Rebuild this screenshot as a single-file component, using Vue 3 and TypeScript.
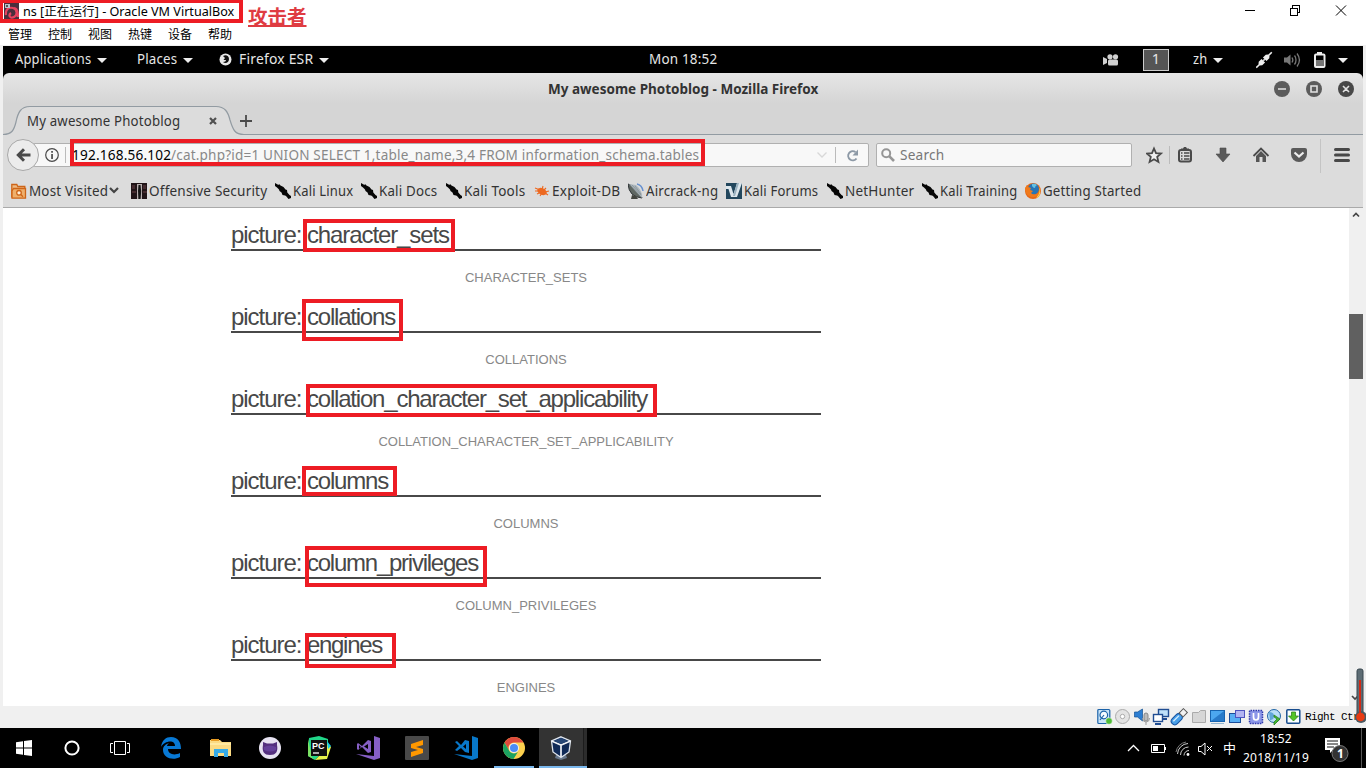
<script setup lang="ts">
interface Bookmark { label: string; icon: string; cell: number; text: number }
interface Entry { name: string; width: number }
interface Mark { x: number; y: number; w: number; h: number }

const bookmarks: Bookmark[] = [
  { label: 'Most Visited', icon: 'folder', cell: 120, text: 79 },
  { label: 'Offensive Security', icon: 'offsec', cell: 144, text: 118 },
  { label: 'Kali Linux', icon: 'kali', cell: 86, text: 60 },
  { label: 'Kali Docs', icon: 'kali', cell: 85, text: 58 },
  { label: 'Kali Tools', icon: 'kali', cell: 88, text: 61 },
  { label: 'Exploit-DB', icon: 'bug', cell: 94, text: 68 },
  { label: 'Aircrack-ng', icon: 'air', cell: 98, text: 72 },
  { label: 'Kali Forums', icon: 'forum', cell: 101, text: 74 },
  { label: 'NetHunter', icon: 'kali', cell: 95, text: 69 },
  { label: 'Kali Training', icon: 'kali', cell: 103, text: 77 },
  { label: 'Getting Started', icon: 'fox', cell: 120, text: 98 },
]
const entries: Entry[] = [
  { name: 'character_sets', width: 142 },
  { name: 'collations', width: 88 },
  { name: 'collation_character_set_applicability', width: 340 },
  { name: 'columns', width: 81 },
  { name: 'column_privileges', width: 171 },
  { name: 'engines', width: 75 },
]
const menus: string[] = ['管理', '控制', '视图', '热键', '设备', '帮助']
const marks: Mark[] = [
  { x: -1, y: -1, w: 244, h: 24 },
  { x: 70, y: 139, w: 635, h: 27 },
  { x: 303, y: 219, w: 152, h: 33 },
  { x: 302, y: 299, w: 101, h: 42 },
  { x: 306, y: 384, w: 351, h: 33 },
  { x: 302, y: 466, w: 95, h: 30 },
  { x: 305, y: 546, w: 182, h: 41 },
  { x: 305, y: 633, w: 91, h: 35 },
]

// Spreads or tightens the letters so that a label occupies the given width.
const vTrack = {
  mounted(el: HTMLElement, binding: { value: number }) {
    const count = (el.textContent ?? '').trim().length
    const base = parseFloat(getComputedStyle(el).letterSpacing) || 0
    const natural = el.getBoundingClientRect().width
    el.style.letterSpacing = `${base + (binding.value - natural) / Math.max(1, count)}px`
  },
}

// Condenses the letterforms so that a label occupies the given width.
const vFit = {
  mounted(el: HTMLElement, binding: { value: number }) {
    const natural = el.getBoundingClientRect().width
    el.style.transformOrigin = '0 50%'
    el.style.transform = `scaleX(${(binding.value + 0.3) / natural})`
    el.style.marginRight = `${binding.value - natural}px`
  },
}
</script>

<template>
  <div class="desktop">
    <header class="wintitle">
      <svg class="logo" width="15" height="17" viewBox="0 0 15 17"><rect width="15" height="17" fill="#4b2f3d" /><path d="M2 12C1 6 5 4 9 5s5 7 1 9-6-2-3-4M10 5c4 0 4 6 4 9" fill="none" stroke="#e8435f" stroke-width="2.2" /><path d="M1 1h5v4H1z" fill="#b9c3cc" /><path d="M2 2h2v2H2z" fill="#555" /></svg>
      <span v-fit="211" class="t">ns [正在运行] - Oracle VM VirtualBox</span>
      <span class="attacker">攻击者</span>
      <svg class="winctl" width="106" height="20" viewBox="0 0 106 20" fill="none" stroke="#000" shape-rendering="crispEdges"><path d="M0 10.500h10M45.500 8.500h7v7h-7zM47.500 8v-2.500h7v7H53" /><path d="M91 5.500l10 10M101 5.500l-10 10" shape-rendering="auto" /></svg>
    </header>
    <nav class="menubar"><span v-for="m in menus" :key="m">{{ m }}</span></nav>

    <main class="vm">
      <div class="guest">
        <div class="gnome">
          <div class="g-apps"><span v-fit="76" class="t">Applications</span><i class="tri" /></div>
          <div class="g-places"><span v-fit="40" class="t">Places</span><i class="tri" /></div>
          <div class="g-ff">
            <svg width="13" height="13" viewBox="0 0 13 13"><circle cx="6.500" cy="6.500" r="6" fill="#e8e8e8" /><path d="M4 3c3-2 6 0 6 3 0 4-4 5-6 3 2 0 3-1 3-2H4.500l1.500-2z" fill="#111" /></svg>
            <span v-fit="74" class="t">Firefox ESR</span><i class="tri" />
          </div>
          <div class="g-clock"><span v-fit="68" class="t">Mon 18:52</span></div>
          <svg class="g-cam" width="16" height="12" viewBox="0 0 16 12" fill="#d0d0d0"><path d="M0 3l4 2v4l-4 2z" /><circle cx="7" cy="2.800" r="2.600" /><circle cx="12.500" cy="2.800" r="2.600" /><rect x="5" y="5.500" width="10" height="6" rx="1.500" /></svg>
          <div class="g-work"><span class="t">1</span></div>
          <div class="g-zh"><span v-fit="14" class="t">zh</span><i class="tri" /></div>
          <svg class="g-tray" width="94" height="18" viewBox="0 0 94 18">
            <g transform="translate(8 9) rotate(-45)" fill="#eee"><path d="M-11-.8h4L-5-2.500h4v5h-4L-7 .8h-4zM11-.8H7L5-2.500H1v5h4L7 .8h4z" /><path d="M-1-.8h2v1.600h-2z" /></g>
            <path d="M28 6.500h3l3.500-3v11l-3.500-3h-3z" fill="#777" /><path d="M36 6.500c1 1.500 1 3.500 0 5M38.500 4.500c2 2.500 2 6.500 0 9M41 2.500c3 4 3 9 0 13" fill="none" stroke="#777" stroke-width="1.300" />
            <path d="M61 1h5v2h-5z" fill="#eee" /><rect x="59" y="3.500" width="9.500" height="12.500" rx="1" fill="none" stroke="#eee" stroke-width="2" /><path d="M60 9h7.500v6H60z" fill="#777" />
            <path d="M82 7h10l-5 5z" fill="#eee" />
          </svg>
        </div>

        <div class="ffhead">
          <div class="fftitle">
            <span v-fit="270" class="t">My awesome Photoblog - Mozilla Firefox</span>
            <svg width="82" height="16" viewBox="0 0 82 16"><g fill="#5c5c5c"><circle cx="8" cy="8" r="8" /><circle cx="40" cy="8" r="8" /><circle cx="72" cy="8" r="8" fill="#484848" /></g><path d="M4 8h8M37 5h6v6h-6zM69 5l6 6M75 5l-6 6" stroke="#e2e2e2" stroke-width="1.600" fill="none" /></svg>
          </div>
          <div class="tabs">
            <svg class="tabshape" width="1360" height="31" viewBox="0 0 1360 31"><path d="M0 29.500C9 29.500 11 25 13 17 15 7 18 2 27 2H213C222 2 225 7 227 15 230 25 232 29.500 241 29.500H1360V31H0z" fill="#dcdcdc" /><path d="M0 29.500C9 29.500 11 25 13 17 15 7 18 1.500 27 1.500H213C222 1.500 225 7 227 15 230 25 232 29.500 241 29.500H1360" fill="none" stroke="#929ba2" stroke-width="1.200" /></svg>
            <div class="tabtext">
              <span v-fit="153" class="t">My awesome Photoblog</span>
              <svg class="x" width="8" height="8" viewBox="0 0 8 8"><path d="M1 1l6 6M7 1L1 7" stroke="#505050" stroke-width="2.200" /></svg>
              <svg class="plus" width="12" height="12" viewBox="0 0 12 12"><path d="M6 0v12M0 6h12" stroke="#4a4a4a" stroke-width="1.800" /></svg>
            </div>
          </div>
        </div>

        <div class="navbar">
          <div class="back"><svg width="15" height="14" viewBox="0 0 15 14"><path d="M14.500 7H3M8 1.300L2.300 7 8 12.700" fill="none" stroke="#4a4a4a" stroke-width="3" /></svg></div>
          <div class="urlbar">
            <svg width="14" height="14" viewBox="0 0 14 14"><circle cx="7" cy="7" r="6.300" fill="none" stroke="#4a4a4a" stroke-width="1.200" /><path d="M6.200 3h1.700v1.700H6.200zM6.200 6h1.700v5H6.200z" fill="#4a4a4a" /></svg>
            <i class="sep" />
            <span v-fit="99" class="host">192.168.56.102</span><span v-fit="528" class="path">/cat.php?id=1 UNION SELECT 1,table_name,3,4 FROM information_schema.tables</span>
            <svg class="drop" width="10" height="6" viewBox="0 0 10 6"><path d="M.5.500L5 5 9.500.500" fill="none" stroke="#d8d8d8" stroke-width="1.300" /></svg>
            <i class="sep2" />
            <svg class="reload" width="13" height="13" viewBox="0 0 13 13"><path d="M10.500 9.500A4.600 4.600 0 1 1 9.500 3" fill="none" stroke="#8d99a6" stroke-width="2" /><path d="M12 .5v6H6.500z" fill="#8d99a6" /></svg>
          </div>
          <div class="search">
            <svg width="14" height="14" viewBox="0 0 14 14" fill="none" stroke="#969696"><circle cx="5.200" cy="5.200" r="4" stroke-width="2" /><path d="M8.200 8.200L13 13" stroke-width="2.600" /></svg>
            <span v-fit="44" class="t">Search</span>
          </div>
          <svg class="tools" width="208" height="38" viewBox="0 0 208 38">
            <path d="M8 12.500l2 4.700 5 .4-3.800 3.300 1.200 5L8 23.200l-4.400 2.700 1.200-5L1 17.600l5-.4z" fill="#f0f0f0" stroke="#4a4a4a" stroke-width="1.800" />
            <path d="M23.500 10v18" stroke="#bbb" />
            <rect x="33" y="14" width="12" height="11.500" rx="2" fill="none" stroke="#4a4a4a" stroke-width="2" /><path d="M35 13.500v-1h2l1-1.500h2l1 1.500h2v1z" fill="#4a4a4a" /><path d="M35 17h1.500M38 17h5.500M35 20h1.500M38 20h5.500M35 23h1.500M38 23h5.500" stroke="#4a4a4a" stroke-width="1.400" />
            <path d="M74 12h6v6h4l-7 8-7-8h4z" fill="#5a5a5a" stroke="#4a4a4a" stroke-width=".6" />
            <path d="M107.500 20L115 12.500l7.500 7.500" fill="none" stroke="#4a4a4a" stroke-width="1.800" /><path d="M110 20l5-5 5 5v6h-3.500v-5h-3v5H110z" fill="#555" />
            <path d="M145 14q0-2 2-2h12q2 0 2 2v4a8 8 0 0 1-16 0z" fill="#5a5a5a" /><path d="M148.500 16.500l4.500 4 4.500-4" fill="none" stroke="#eee" stroke-width="2.200" />
            <path d="M174.500 3v34" stroke="#c4c4c4" />
            <path d="M189.500 13.500h13M189.500 19h13M189.500 24.500h13" stroke="#484848" stroke-width="3" stroke-linecap="round" />
          </svg>
        </div>

        <div class="bookmarks">
          <div v-for="b in bookmarks" :key="b.label" class="bm" :style="{ width: b.cell + 'px' }">
            <svg width="16" height="16" viewBox="0 0 16 16">
              <g v-if="b.icon === 'folder'" fill="none" stroke="#ce6518" stroke-width="1.300"><path d="M.8 14.500V1.500h5l1 2h7v2" fill="#eebb85" /><path d="M2.500 5.500h12v9.700H1V8z" fill="#efb06c" /><circle cx="8" cy="9.800" r="2.300" fill="#fff0dc" /><path d="M9.800 11.500l2.200 2.200" /></g>
              <g v-else-if="b.icon === 'offsec'"><path d="M0 0h16v16H0z" fill="#211518" /><path d="M1 2h3v4H1zM12 2h3v4h-3zM1 8h4v2H1zM12 8h4v2h-4z" fill="#452b2f" /><path d="M6 1h5v15H6z" fill="#b9b0b0" /><path d="M7.500 2h2l.7 6-.6 8H7.400L7 8z" fill="#161616" /></g>
              <path v-else-if="b.icon === 'kali'" d="M0 0l3.500 2L4 1l1.500 1.500 3 1.500 2 2.500 1.500.5.300 2.500 2.200 2.500 1.500 1v2L13.500 16l-2.500-3-1-.5-2.500-.5L6.500 9.500 4.500 8 4 6.500 2 4.500 0 3z" fill="#060606" />
              <g v-else-if="b.icon === 'bug'" fill="#ed6921"><ellipse cx="8" cy="8.500" rx="5" ry="3.300" transform="rotate(25 8 8.500)" /><path d="M1 5l5 2M3 11l4-2M9 3l-1 4M12 5l-3 3M15 8l-4 1M14 12l-3-2M6 13l2-3M1 8h5" stroke="#ed6921" stroke-width="1.100" /></g>
              <g v-else-if="b.icon === 'air'"><path d="M0 1Q1 14 14 15L10 5z" fill="#5f6762" stroke="#32373a" /><path d="M1 1L14 15Q15 8 8 2z" fill="#adb8be" /><path d="M2 2l11 12M4 2l9 10M7 3l6 8" stroke="#788389" stroke-width=".6" /><path d="M9 1q5 1 6 7" fill="none" stroke="#6790cf" stroke-width="1.500" /><path d="M4 12l-1 4h7l-2-3z" fill="#43453f" /></g>
              <g v-else-if="b.icon === 'forum'"><path d="M0 0h16v16H0z" fill="#23475d" /><path d="M0 3h5l2.500 8L11 0h5l-5 14H5L2.500 6H0z" fill="#dce6ec" /><path d="M11 0h2L9 13H7z" fill="#9ab2c0" /></g>
              <g v-else><circle cx="8" cy="8" r="8" fill="#e66817" /><circle cx="8.500" cy="6" r="5.500" fill="#2875b5" /><path d="M7 1q3-1 5 1-2 1-2 3-2 0-3-2z" fill="#63c2e4" /><path d="M0 5l2-3 1 2 3 1-1 2 3 1-2 2q3 3 7 0 2-2 1-6 2 4 0 7-3 4-8 3Q0 12 0 5z" fill="#f07a1b" /><path d="M14 4q2 3 1 7-1 3-4 4 5-5 3-11z" fill="#ffd34a" /></g>
            </svg>
            <span v-fit="b.text" class="t">{{ b.label }}</span>
            <svg v-if="b.icon === 'folder'" class="chev" width="10" height="7" viewBox="0 0 10 7"><path d="M1 1l4 4 4-4" fill="none" stroke="#444" stroke-width="2.200" /></svg>
          </div>
        </div>

        <div class="page">
          <div class="content">
            <section v-for="e in entries" :key="e.name" class="entry">
              <h2><span v-track="76">picture:&nbsp;</span><span v-track="e.width">{{ e.name }}</span></h2>
              <p>{{ e.name.toUpperCase() }}</p>
            </section>
          </div>
          <aside class="scroll">
            <svg width="14" height="14" viewBox="0 0 14 14"><path d="M4 8.500l3-3 3 3" fill="none" stroke="#444" stroke-width="1.700" /></svg>
            <i class="thumb" />
            <svg class="down" width="14" height="14" viewBox="0 0 14 14"><path d="M3 5l3 3 3-3" fill="none" stroke="#444" stroke-width="1.700" /></svg>
          </aside>
        </div>
      </div>
    </main>

    <div class="status">
      <svg width="204" height="18" viewBox="0 0 204 18">
        <g fill="#c9e4f8" stroke="#1b62a8" stroke-width="1.200"><rect x=".8" y="1.500" width="12" height="14" rx="1" /><circle cx="6.800" cy="7" r="3.800" fill="#f6fbff" /><path d="M7 7l-4 5" /></g><circle cx="12" cy="13" r="3.300" fill="#4fbb37" stroke="#fff" stroke-width=".5" />
        <circle cx="25.500" cy="8.500" r="7" fill="#e3e3e3" stroke="#aaa" /><circle cx="25.500" cy="8.500" r="2.200" fill="#fff" stroke="#aaa" />
        <path d="M37.500 4h3l5-3v12l-5-4h-3z" fill="#2d7ed2" stroke="#155394" stroke-width=".7" /><rect x="47" y="5" width="4" height="8" rx="2" fill="#bbb" stroke="#888" /><path d="M45.500 10q0 4 3.500 4t3.500-4M49 14v3" fill="none" stroke="#999" />
        <g stroke="#204d92"><rect x="61.500" y="1.500" width="10" height="7" fill="#bfe1fa" stroke-width="1.400" /><path d="M65 11h5" stroke-width="2" /><rect x="56.500" y="6.500" width="9" height="7" fill="#fff" stroke-width="1.400" /><path d="M58 16h6" stroke-width="2" /></g>
        <g transform="translate(82 9) rotate(-45)"><rect x="-9.500" y="-3.600" width="12.500" height="7.200" rx="3.600" fill="#49a0e9" stroke="#1652a0" /><path d="M-7-1h8" stroke="#d7eeff" stroke-width="1.300" /><rect x="3" y="-2.800" width="6" height="5.600" fill="#f2f2f2" stroke="#555" /></g>
        <path d="M95.500 14.500v-10h6l2-2h5v12z" fill="#d6d6d6" stroke="#aaa" />
        <rect x="113.500" y="2.500" width="14" height="11" fill="#4ca7ef" stroke="#1764b0" /><path d="M114 13L127 3v10z" fill="#287ac9" /><path d="M114 15.500h13" stroke="#96b8d0" />
        <g stroke="#1b4d9a"><rect x="132.500" y="5.500" width="11" height="9" fill="#57aef4" /><rect x="138.500" y="2.500" width="9" height="7" fill="#b2b4f1" stroke="#4f55c0" /></g>
        <rect x="152.500" y="2.500" width="13" height="13" rx="1" fill="#8c97e8" stroke="#2e38ac" stroke-dasharray="1.500 1" stroke-width="1.500" /><path d="M156.500 5v4q0 3 2.500 3t2.500-3V5" fill="none" stroke="#fff" stroke-width="1.700" />
        <circle cx="177" cy="8" r="6.500" fill="#b8def8" stroke="#2367a6" /><path d="M172 4q5 0 5 4t-4 4" fill="#5fa6d8" /><path d="M177 7l6 4-6 6v-3l3-3-3-2z" fill="#46b72f" stroke="#217a1b" stroke-width=".7" />
        <rect x="189.800" y="1.800" width="13" height="13.500" rx="1" fill="#f9ffff" stroke="#174c8e" stroke-width="1.500" /><path d="M194.500 4h4v4h3l-5 5-5-5h3z" fill="#54c527" stroke="#267914" stroke-width=".7" />
      </svg>
      <span v-track="60" class="t">Right Ctrl</span>
    </div>

    <footer class="taskbar">
      <div class="cell"><svg width="16" height="16" viewBox="0 0 16 16" fill="#fff"><path d="M0 2.200l7-1v6.300H0zM8 1l8-1v7.500H8zM0 8.500h7v6.300l-7-1zM8 8.500h8V16l-8-1z" /></svg></div>
      <div class="cell"><svg width="16" height="16" viewBox="0 0 16 16"><circle cx="8" cy="8" r="6.600" fill="none" stroke="#fff" stroke-width="2" /></svg></div>
      <div class="cell"><svg width="20" height="14" viewBox="0 0 20 14" fill="none" stroke="#fff"><path d="M4.500.5h11v13h-11zM3 2.500H.5v9H3M17 2.500h2.500v9H17" /></svg></div>
      <div class="cell app first"><svg width="20" height="22" viewBox="0 0 20 22"><path d="M0 10C1 3 5 0 10 0c7 0 10 5 10 12H7c0 5 6 7 12 4v4C12 24 2 21 2 13c0-4 3-6 6-7-1 1-2 2-2 3h8C14 2 3 4 0 10z" fill="#0879d5" /></svg></div>
      <div class="cell app"><svg width="22" height="18" viewBox="0 0 22 18"><path d="M0 1h10l2 2h9v14H0z" fill="#fbdb83" /><path d="M1 0h8v2H1z" fill="#e89c24" /><path d="M0 4h21v2H0z" fill="#ffe9a0" /><path d="M4 18v-8h14v8h-4v-4H8v4z" fill="#37abe7" /></svg></div>
      <div class="cell app"><svg width="22" height="22" viewBox="0 0 22 22"><circle cx="11" cy="11" r="11" fill="#e7e3f2" /><path d="M4 5l4 1.500h6L18 5v3q2 10-7 10T4 8z" fill="#54307f" /><path d="M5 10q6-3 12 0v3q-6 3-12 0z" fill="#65419a" /></svg></div>
      <div class="cell app"><svg width="24" height="24" viewBox="0 0 24 24"><path d="M2 2l10-2 9 3v8L8 24 1 20z" fill="#21d789" /><path d="M20 7l4 4-4 12-12 1 7-7z" fill="#e8f34a" /><path d="M1 3l4 18 3 3-7-4z" fill="#7be264" /><path d="M20 5l4 5-3 3z" fill="#12c9e8" /><rect x="4" y="4" width="16" height="16" fill="#101010" /><text x="5" y="12.500" class="pc">PC</text><path d="M6 17h6" stroke="#fff" stroke-width="1.300" /></svg></div>
      <div class="cell app"><svg width="24" height="24" viewBox="0 0 24 24"><path d="M18 0l6 2v20l-6 2L0 18l18 2z" fill="#865fc5" /><path d="M2 7l4 3 6-6 3 1v11l-3 1-6-6-4 3-1-1V8z" fill="#865fc5" /><path d="M3 9v4l2-2zM12 8v5l-4-2.500z" fill="#000" /></svg></div>
      <div class="cell app"><svg width="24" height="24" viewBox="0 0 24 24"><rect width="24" height="24" rx="1" fill="#494949" /><path d="M6 8l12-4v5l-7 2 7 2v4L6 21v-5l7-2-7-2z" fill="#ff9800" /></svg></div>
      <div class="cell app"><svg width="24" height="24" viewBox="0 0 24 24"><path d="M18 0l6 2v20l-6 2L0 18l18 2z" fill="#0878c9" /><path d="M1 6l2-1 4 4 4-5 4 1v12l-4-1-4-4-4 3-2-1 4-4z" fill="#0878c9" /><path d="M12 8v5l-3-2.500z" fill="#000" /></svg></div>
      <div class="cell app chrome"><svg width="22" height="22" viewBox="0 0 22 22"><circle cx="11" cy="11" r="11" fill="#fcd04e" /><path d="M1.500 5.500A11 11 0 0 1 20.500 5.500H11A5.500 5.500 0 0 0 6 13.500z" fill="#df4b3d" /><path d="M1.500 5.500A11 11 0 0 0 10.500 22L15.700 13.700A5.500 5.500 0 0 1 6.200 13.700z" fill="#1ba261" /><circle cx="11" cy="11" r="5" fill="#f1f1f1" /><circle cx="11" cy="11" r="4" fill="#4a8bf5" /></svg></div>
      <div class="cell vbox"><svg width="22" height="24" viewBox="0 0 22 24"><path d="M6 19h10l1 3-6 2-6-2z" fill="#66768b" /><path d="M11 .8L20.500 5 19 16l-8 5.500L3 16 1.500 5z" fill="#102a57" stroke="#dfe5ed" stroke-width="1.300" /><path d="M1.500 5L11 9l9.500-4M11 9v12" fill="none" stroke="#f0f3f7" stroke-width="1.700" /><path d="M4 5l7-3 7 3-7 3z" fill="#274776" /></svg></div>
      <svg class="tray" width="120" height="40" viewBox="0 0 120 40" fill="none" stroke="#fff">
        <path d="M8 23l5.500-5.500L19 23" stroke-width="1.300" />
        <path d="M31.500 16.500h13v8h-13zM45.500 19v3" /><path d="M33 18h5v5h-5z" fill="#fff" stroke="none" />
        <path d="M57.500 26A11 11 0 0 1 68 15.500M60.500 27A8 8 0 0 1 68.500 19M64 27.500a5 5 0 0 1 5-5" stroke="#ccc" /><path d="M56 24A12 12 0 0 1 66 14" stroke="#777" /><circle cx="68" cy="26.500" r="1.400" fill="#fff" stroke="none" />
        <path d="M78.500 18.500h2.500l4-3.500v12l-4-3.500h-2.500zM87 18l5 5M92 18l-5 5" />
      </svg>
      <span class="ime">中</span>
      <div class="clock"><span v-track="32">18:52</span><span v-track="66">2018/11/19</span></div>
      <svg class="notif" width="26" height="28" viewBox="0 0 26 28"><path d="M1 3h15v12H9l-3 3v-3H1z" fill="#fff" /><path d="M3 6h11M3 9h11M3 12h7" stroke="#111" /><circle cx="16" cy="18.500" r="8" fill="#333" stroke="#777" /><text x="13" y="23" class="one">1</text></svg>
      <i class="peek" />
    </footer>

    <div v-for="(m, i) in marks" :key="i" class="mark" :style="{ left: m.x + 'px', top: m.y + 'px', width: m.w + 'px', height: m.h + 'px' }" />
    <svg class="thermo" width="12" height="56" viewBox="0 0 12 56"><rect x="2" y="1" width="6" height="46" rx="2" fill="#5d6c74" stroke="#38464e" /><circle cx="6" cy="49" r="6" fill="#495961" /><path d="M5 12v36" stroke="#d02b17" stroke-width="2" /><circle cx="5.500" cy="49" r="4.300" fill="#e83b12" /></svg>
  </div>
</template>

<style>
body { margin: 0; overflow: hidden; }
</style>

<style scoped>
* { box-sizing: border-box; }
svg { display: block; flex: none; }
.desktop { position: relative; width: 1366px; height: 768px; overflow: hidden; display: flex; flex-direction: column; background: #fff; font-family: "Noto Sans", "Noto Sans CJK SC", sans-serif; font-size: 14.5px; color: #333; }
.t, .host, .path, .clock span, h2 span { display: inline-block; white-space: nowrap; flex: none; }
.gnome .t, .navbar span, .bookmarks .t, .tabtext .t { letter-spacing: 0.2px; }
.wintitle { height: 24px; flex: none; display: flex; align-items: flex-start; color: #000; font-size: 12px; }
.logo { margin: 3px 4px 0 4px; }
.wintitle .t { line-height: 16px; margin-top: 4px; width: max-content; }
.attacker { margin-left: 14px; margin-top: 4px; height: 24px; font: bold 19.500px/24px "Noto Sans CJK SC", sans-serif; color: #df3c42; text-decoration: underline; text-decoration-thickness: 2px; text-underline-offset: 1px; }
.winctl { margin-left: auto; margin-right: 15px; }
.menubar { height: 21px; flex: none; display: flex; padding-left: 8px; font: 12px/20px "Noto Sans CJK SC", sans-serif; color: #000; }
.menubar span { width: 40px; }
.vm { height: 661px; flex: none; background: #f0f0f0; padding: 1px 3px 0; }
.guest { height: 660px; display: flex; flex-direction: column; background: #000; }
.gnome { height: 27px; flex: none; display: flex; align-items: center; color: #e6e6e6; background: #000; line-height: 20px; }
.gnome > div { display: flex; align-items: center; flex: none; height: 27px; }
.gnome .t { margin-top: -4px; }
.tri { width: 0; height: 0; border: 5px solid transparent; border-top-color: #eee; border-bottom: 0; margin-left: 6px; margin-top: 1px; flex: none; }
.g-apps { width: 122px; padding-left: 12px; }
.g-places { width: 91px; padding-left: 12px; }
.g-ff { width: 430px; padding-left: 3px; }
.g-ff svg { margin-right: 7px; }
.g-clock { width: 457px; }
.g-clock .t { margin-left: 3px; }
.g-cam { margin-right: 24px; }
.gnome .g-work { width: 26px; height: 22px; border: 1px solid #ccc; background: #555; justify-content: center; }
.g-zh { width: 64px; padding-left: 24px; }
.g-tray { margin-left: 23px; }
.ffhead { height: 63px; flex: none; border-radius: 6px 6px 0 0; background: linear-gradient(#e6e6e6, #d5d5d5 30px, #d5d5d5); }
.fftitle { height: 32px; display: flex; align-items: center; font-weight: bold; padding-left: 545px; }
.fftitle .t { margin-top: -3px; }
.fftitle svg { margin-left: auto; margin-right: 7px; }
.tabs { height: 31px; display: grid; }
.tabs > * { grid-area: 1 / 1; }
.tabtext { display: flex; align-items: center; height: 30px; padding-left: 24px; }
.tabtext .x { margin-left: 29px; margin-top: 2px; }
.tabtext .plus { margin-left: 23px; margin-top: 2px; }
.navbar { height: 38px; flex: none; background: #dcdcdc; display: flex; align-items: center; padding-left: 4px; }
.back { width: 32px; height: 32px; border-radius: 50%; border: 1px solid #a8a8a8; background: #ececec; display: flex; align-items: center; justify-content: center; flex: none; z-index: 1; }
.urlbar { width: 836px; height: 24px; margin-left: -6px; border: 1px solid #b0b0b0; border-radius: 2px; background: #f8f8f8; display: flex; align-items: center; flex: none; padding-left: 11px; }
.sep, .sep2 { width: 1px; height: 16px; background: #bbb; flex: none; }
.sep { margin: 0 6px 0 6px; }
.host, .path, .search .t, .bm .t { margin-top: -2px; }
.host { color: #000; }
.path { color: #888; }
.drop { margin-left: auto; }
.sep2 { margin: 0 10px 0 8px; }
.reload { margin-right: 9px; }
.search { width: 256px; height: 24px; margin-left: 7px; flex: none; border: 1px solid #b0b0b0; border-radius: 2px; background: #f8f8f8; display: flex; align-items: center; padding-left: 4px; color: #777; }
.search .t { margin-left: 5px; }
.tools { margin-left: 14px; }
.bookmarks { height: 34px; flex: none; background: #dcdcdc; border-bottom: 1px solid #aaa; display: flex; align-items: center; padding-left: 8px; }
.bm { display: flex; align-items: center; flex: none; }
.bm .t { margin-left: 2px; }
.bm .chev { margin-left: 1px; }
.page { height: 498px; flex: none; display: flex; background: #fff; overflow: hidden; }
.content { width: 1346px; padding: 6px 0 0 228px; }
.entry { width: 590px; height: 82px; font-family: "Liberation Sans", Arial, sans-serif; }
h2 { margin: 0; height: 37px; line-height: 42px; border-bottom: 2px solid #484848; font-weight: normal; font-size: 24px; letter-spacing: -1px; color: #484848; white-space: nowrap; }
p { margin: 0; padding-top: 19px; text-align: center; font-size: 13px; line-height: 16px; color: #888; }
.scroll { width: 14px; background: #f0f0f0; display: flex; flex-direction: column; }
.thumb { height: 65px; background: #606060; margin-top: 92px; }
.down { margin-top: auto; margin-bottom: 1px; }
.status { height: 22px; flex: none; background: #f0f0f0; display: flex; align-items: center; padding-left: 1097px; }
.status .t { margin-left: 4px; font: 11px/22px "Liberation Mono", monospace; color: #000; }
.taskbar { height: 40px; flex: none; background: #000; display: flex; align-items: center; color: #fff; }
.cell { width: 48px; height: 40px; display: flex; align-items: center; justify-content: center; flex: none; }
.app { width: 49px; }
.first { margin-left: 3px; }
.first svg { margin-right: 2px; }
.chrome { background: linear-gradient(#7ab8ed, #7ab8ed) 4px 38px / 40px 2px no-repeat; }
.chrome svg { margin-right: 2px; }
.vbox { border-bottom: 2px solid #7ab8ed; background: linear-gradient(90deg, #333 44px, #1c1c1c 44px, #1c1c1c 45px, #2c2c2c 45px); padding: 2px 4px 0 0; }
.pc { font: bold 9px "Liberation Sans", sans-serif; fill: #fff; }
.tray { margin-left: 533px; }
.ime { font: 13px/38px "Noto Sans CJK SC", sans-serif; margin-left: -17px; width: 20px; }
.clock { width: 66px; height: 40px; display: flex; flex-direction: column; align-items: center; font-size: 12px; line-height: 19px; padding-top: 1px; }
.notif { margin-left: 15px; margin-top: 2px; }
.one { font: bold 12px "Noto Sans", sans-serif; fill: #fff; }
.peek { width: 1px; height: 40px; background: #555; margin-left: auto; margin-right: 4px; }
.mark { position: absolute; border: 4px solid #ed1c24; z-index: 3; }
.thermo { position: absolute; left: 1355px; top: 668px; z-index: 4; }
</style>
